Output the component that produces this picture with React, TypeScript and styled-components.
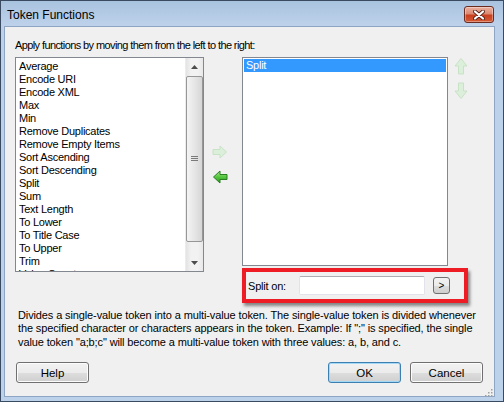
import styled, { createGlobalStyle } from "styled-components";

const GlobalStyle = createGlobalStyle`
  html, body {
    margin: 0;
    padding: 0;
    background: #ffffff;
  }
  body {
    width: 504px;
    height: 402px;
    overflow: hidden;
  }
`;

const Window = styled.div`
  width: 504px;
  height: 402px;
  box-sizing: border-box;
  border: 1px solid #3a4a60;
  background: linear-gradient(to bottom, #a9c2df 0px, #bdd2ea 24px, #bcd1ea 100%);
  display: flex;
  flex-direction: column;
  font-family: "Liberation Sans", Arial, sans-serif;
  font-size: 11px;
  color: #000;
`;

const TitleBar = styled.div`
  height: 25px;
  box-sizing: border-box;
  padding: 2px 9px 0 6px;
  display: flex;
  align-items: center;
  justify-content: space-between;
`;

const Title = styled.span`
  font-family: "Liberation Sans", Arial, sans-serif;
  font-size: 12px;
  color: #000;
`;

const CloseButton = styled.div`
  width: 30px;
  height: 17px;
  box-sizing: border-box;
  border: 1px solid #6a2b20;
  border-radius: 3px;
  background: linear-gradient(to bottom, #eab0a0 0%, #dc8a72 45%, #c8401f 55%, #d65a34 100%);
  box-shadow: inset 0 0 0 1px rgba(255, 255, 255, 0.35);
  display: flex;
  align-items: center;
  justify-content: center;
`;

const Client = styled.div`
  position: relative;
  flex: 1;
  margin: 0 8px 4px 3px;
  border: 1px solid #8ea6c4;
  background: #f0f0f0;
  padding: 12px 10px 13px 10px;
  display: flex;
  flex-direction: column;
`;

const Instruction = styled.div`
  line-height: 13px;
  white-space: nowrap;
  letter-spacing: -0.6px;
`;

const MainRow = styled.div`
  margin-top: 5px;
  display: flex;
  align-items: flex-start;
`;

const ListBox = styled.div<{ $width: number; $height: number }>`
  width: ${({ $width }) => $width}px;
  height: ${({ $height }) => $height}px;
  box-sizing: border-box;
  border: 1px solid #828790;
  background: #ffffff;
  display: flex;
  overflow: hidden;
`;

const Items = styled.div`
  flex: 1;
  padding: 1px;
  overflow: hidden;
`;

const Item = styled.div<{ $selected?: boolean }>`
  height: 13px;
  line-height: 13px;
  padding-left: 2px;
  white-space: nowrap;
  letter-spacing: -0.25px;
  background: ${({ $selected }) => ($selected ? "#3399ff" : "transparent")};
  color: ${({ $selected }) => ($selected ? "#ffffff" : "#000000")};
`;

const FirstGap = styled.div`
  height: 1px;
`;

const ScrollBar = styled.div`
  width: 17px;
  display: flex;
  flex-direction: column;
  background: linear-gradient(to right, #e3e3e3, #f2f2f2 30%, #f2f2f2 70%, #e8e8e8);
  border-left: 1px solid #ececec;
`;

const ScrollArrow = styled.div`
  height: 17px;
  display: flex;
  align-items: center;
  justify-content: center;
`;

const Track = styled.div`
  flex: 1;
  padding: 1px 0 12px 0;
  display: flex;
`;

const Thumb = styled.div`
  flex: 1;
  box-sizing: border-box;
  border: 1px solid #979797;
  border-radius: 2px;
  background: linear-gradient(to right, #f4f4f4, #e6e6e6 50%, #d6d6d6);
  display: flex;
  align-items: center;
  justify-content: center;
`;

const ArrowColumn = styled.div`
  width: 38px;
  padding: 88px 0 0 8px;
  box-sizing: border-box;
  display: flex;
  flex-direction: column;
  gap: 11px;
`;

const RightArea = styled.div`
  width: 226px;
  display: flex;
  flex-direction: column;
`;

const RightTop = styled.div`
  display: flex;
`;

const UpDownColumn = styled.div`
  padding: 0 0 0 6px;
  display: flex;
  flex-direction: column;
  gap: 7px;
`;

const SplitRow = styled.div`
  margin-top: 2px;
  height: 35px;
  box-sizing: border-box;
  border: 4px solid #ee1c24;
  box-shadow: 2px 3px 3px rgba(0, 0, 0, 0.45);
  padding-left: 2px;
  display: flex;
  align-items: center;
`;

const SplitLabel = styled.span`
  width: 51px;
  white-space: nowrap;
  letter-spacing: -0.2px;
`;

const TextInput = styled.div`
  width: 126px;
  height: 19px;
  box-sizing: border-box;
  border: 1px solid #e2e3ea;
  border-top-color: #abadb3;
  border-radius: 2px;
  background: #ffffff;
`;

const SmallButton = styled.div`
  margin-left: 8px;
  width: 17px;
  height: 17px;
  box-sizing: border-box;
  border: 1px solid #707070;
  border-radius: 3px;
  background: linear-gradient(to bottom, #f2f2f2 0%, #ebebeb 50%, #dddddd 51%, #cfcfcf 100%);
  display: flex;
  align-items: center;
  justify-content: center;
  font-size: 10px;
`;

const Description = styled.div`
  margin: 6px 0 0 3px;
  line-height: 13.3px;
  white-space: nowrap;
  letter-spacing: -0.12px;
`;

const ButtonRow = styled.div`
  margin-top: auto;
  padding: 0 1px 0 1px;
  display: flex;
  gap: 9px;
`;

const Spacer = styled.div`
  flex: 1;
`;

const DialogButton = styled.div<{ $default?: boolean }>`
  width: 73px;
  height: 21px;
  box-sizing: border-box;
  border: 1px solid ${({ $default }) => ($default ? "#3c7fb1" : "#707070")};
  border-radius: 3px;
  background: linear-gradient(to bottom, #f2f2f2 0%, #ebebeb 50%, #dddddd 51%, #cfcfcf 100%);
  box-shadow: inset 0 0 0 1px ${({ $default }) => ($default ? "#a4d9f5" : "#fcfcfc")};
  display: flex;
  align-items: center;
  justify-content: center;
  font-size: 11.5px;
`;

const Grip = styled.div`
  position: absolute;
  right: 1px;
  bottom: 1px;
  width: 8px;
  height: 8px;
`;

const functions = [
  "Average",
  "Encode URI",
  "Encode XML",
  "Max",
  "Min",
  "Remove Duplicates",
  "Remove Empty Items",
  "Sort Ascending",
  "Sort Descending",
  "Split",
  "Sum",
  "Text Length",
  "To Lower",
  "To Title Case",
  "To Upper",
  "Trim",
  "Value Count",
];

function CloseGlyph() {
  return (
    <svg width="12" height="10" viewBox="0 0 12 10">
      <path d="M2 1.5 L10 8.5 M10 1.5 L2 8.5" stroke="#5a2418" strokeWidth="4" strokeLinecap="round" />
      <path d="M2 1.5 L10 8.5 M10 1.5 L2 8.5" stroke="#ffffff" strokeWidth="2.2" strokeLinecap="round" />
    </svg>
  );
}

function Triangle({ up }: { up?: boolean }) {
  return (
    <svg width="7" height="4" viewBox="0 0 7 4">
      <path d={up ? "M0 4 L3.5 0 L7 4 Z" : "M0 0 L3.5 4 L7 0 Z"} fill="#4d4d4d" />
    </svg>
  );
}

function GripLines() {
  return (
    <svg width="7" height="6" viewBox="0 0 7 6">
      <path d="M0 0.5 H7 M0 2.5 H7 M0 4.5 H7" stroke="#7a7a7a" strokeWidth="1" />
    </svg>
  );
}

function HArrow({ dir, enabled }: { dir: "left" | "right"; enabled?: boolean }) {
  const points =
    dir === "right"
      ? "1,4.5 8,4.5 8,1 14.5,7 8,13 8,9.5 1,9.5"
      : "15,4.5 8,4.5 8,1 1.5,7 8,13 8,9.5 15,9.5";
  return (
    <svg width="16" height="14" viewBox="0 0 16 14">
      <defs>
        <linearGradient id="greenGrad" x1="0" y1="0" x2="0" y2="1">
          <stop offset="0" stopColor="#a8ec8a" />
          <stop offset="0.5" stopColor="#55c63e" />
          <stop offset="1" stopColor="#2b9a22" />
        </linearGradient>
      </defs>
      <polygon
        points={points}
        fill={enabled ? "url(#greenGrad)" : "#dcefda"}
        stroke={enabled ? "#2a7d22" : "#c8e2c5"}
        strokeWidth="1"
        strokeLinejoin="round"
      />
    </svg>
  );
}

function VArrow({ dir }: { dir: "up" | "down" }) {
  const points =
    dir === "up"
      ? "4.5,17 4.5,9 1,9 7,1.5 13,9 9.5,9 9.5,17"
      : "4.5,1 4.5,9 1,9 7,16.5 13,9 9.5,9 9.5,1";
  return (
    <svg width="14" height="18" viewBox="0 0 14 18">
      <polygon points={points} fill="#dcefda" stroke="#c8e2c5" strokeWidth="1" strokeLinejoin="round" />
    </svg>
  );
}

function GripDots() {
  const dots = [
    [6, 0],
    [3, 3],
    [6, 3],
    [0, 6],
    [3, 6],
    [6, 6],
  ];
  return (
    <svg width="8" height="8" viewBox="0 0 8 8">
      {dots.map(([x, y]) => (
        <rect key={`${x}-${y}`} x={x} y={y} width="1.5" height="1.5" fill="#a0a0a0" />
      ))}
    </svg>
  );
}

export default function App() {
  return (
    <>
      <GlobalStyle />
      <Window>
        <TitleBar>
          <Title>Token Functions</Title>
          <CloseButton>
            <CloseGlyph />
          </CloseButton>
        </TitleBar>
        <Client>
          <Instruction>Apply functions by moving them from the left to the right:</Instruction>
          <MainRow>
            <ListBox $width={189} $height={215}>
              <Items>
                <FirstGap />
                {functions.map((name) => (
                  <Item key={name}>{name}</Item>
                ))}
              </Items>
              <ScrollBar>
                <ScrollArrow>
                  <Triangle up />
                </ScrollArrow>
                <Track>
                  <Thumb>
                    <GripLines />
                  </Thumb>
                </Track>
                <ScrollArrow>
                  <Triangle />
                </ScrollArrow>
              </ScrollBar>
            </ListBox>
            <ArrowColumn>
              <HArrow dir="right" />
              <HArrow dir="left" enabled />
            </ArrowColumn>
            <RightArea>
              <RightTop>
                <ListBox $width={210} $height={209}>
                  <Items>
                    <Item $selected>Split</Item>
                  </Items>
                </ListBox>
                <UpDownColumn>
                  <VArrow dir="up" />
                  <VArrow dir="down" />
                </UpDownColumn>
              </RightTop>
              <SplitRow>
                <SplitLabel>Split on:</SplitLabel>
                <TextInput />
                <SmallButton>&gt;</SmallButton>
              </SplitRow>
            </RightArea>
          </MainRow>
          <Description>
            Divides a single-value token into a multi-value token. The single-value token is divided whenever
            <br />
            the specified character or characters appears in the token. Example: If ";" is specified, the single
            <br />
            value token "a;b;c" will become a multi-value token with three values: a, b, and c.
          </Description>
          <ButtonRow>
            <DialogButton>Help</DialogButton>
            <Spacer />
            <DialogButton $default>OK</DialogButton>
            <DialogButton>Cancel</DialogButton>
          </ButtonRow>
          <Grip>
            <GripDots />
          </Grip>
        </Client>
      </Window>
    </>
  );
}
